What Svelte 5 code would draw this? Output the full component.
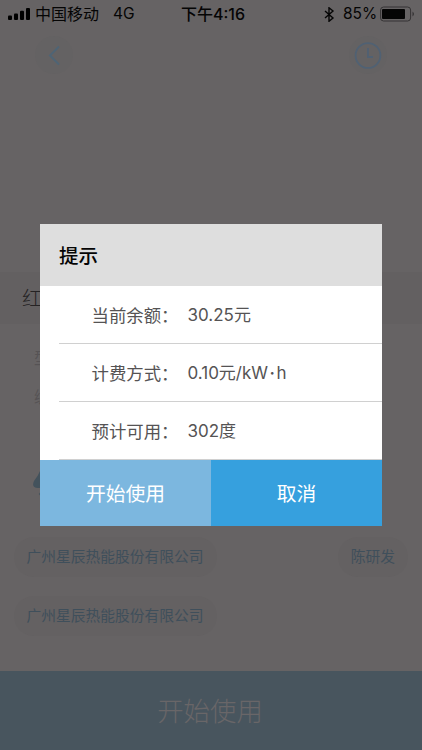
<script>
  const rows = [
    { label: '当前余额：', value: ['30.25元'] },
    { label: '计费方式：', value: ['0.10元/kW', '·', 'h'] },
    { label: '预计可用：', value: ['302度'] }
  ];
</script>

<div class="screen">
  <header class="status">
    <svg class="signal" width="23" height="12" viewBox="0 0 23 12"><rect y="7.5" width="4" height="4.5" rx="1"/><rect x="6" y="5.5" width="4" height="6.5" rx="1"/><rect x="12" y="2.8" width="4" height="9.2" rx="1"/><rect x="18" width="4" height="12" rx="1"/></svg>
    <span class="carrier">中国移动</span>
    <span class="net">4G</span>
    <b class="time">下午4:16</b>
    <svg class="bt" width="11" height="15" viewBox="0 0 11 15" fill="none" stroke="#060606" stroke-width="1.4"><path d="M1 4l8 7-4 3.3V.8L9 4l-8 7"/></svg>
    <span class="pct">85%</span>
    <svg width="36" height="16" viewBox="0 0 36 16"><rect x=".6" y="1" width="30" height="14" rx="3" fill="none" stroke="#353334"/><rect x="2" y="3" width="23" height="10" rx="1" fill="#050505"/><path d="M32.5 5.5q3 2.5 0 5z" fill="#353334"/></svg>
  </header>

  <nav>
    <div class="round">
      <svg width="38" height="38" viewBox="0 0 38 38" fill="none" stroke="#4e6475" stroke-width="2"><path d="M24 10.5l-9 9 9 9"/></svg>
    </div>
    <div class="round">
      <svg width="38" height="38" viewBox="0 0 38 38" fill="none" stroke="#506173" stroke-width="1.8"><circle cx="19" cy="19.5" r="12.4"/><path d="M19 12v9h5"/></svg>
    </div>
  </nav>

  <section class="device">红</section>
  <section class="info">
    <div>型号</div>
    <div>编号</div>
  </section>
  <section class="water">
    <svg width="30" height="30" viewBox="0 0 30 30"><path d="M8 0Q5 7 1 12q-3 7 4 7h12V0z" fill="#43525c"/><circle cx="7" cy="25" r="1.2" fill="#4c575f"/></svg>
  </section>

  <section class="tags">
    <div class="tagrow"><span class="tag">广州星辰热能股份有限公司</span><span class="tag person">陈研发</span></div>
    <div class="tagrow"><span class="tag">广州星辰热能股份有限公司</span></div>
  </section>
  <footer>开始使用</footer>

  <div class="dialog" role="dialog" aria-label="提示">
    <h2>提示</h2>
    <div class="rows">
      {#each rows as row}
        <div class="row">
          <span class="label">{row.label}</span>
          <span class="value">{#each row.value as part}<span class:dot={part === '·'}>{part}</span>{/each}</span>
        </div>
      {/each}
    </div>
    <div class="actions">
      <button class="start">开始使用</button>
      <button class="cancel">取消</button>
    </div>
  </div>
</div>

<style>
  .screen {
    position: relative;
    display: flex;
    flex-direction: column;
    width: 422px;
    height: 750px;
    overflow: hidden;
    background: #666364;
    color: #050505;
    font-family: Inter, "Noto Sans CJK SC", sans-serif;
  }
  .status {
    box-sizing: border-box;
    display: flex;
    align-items: center;
    flex: none;
    height: 28px;
    padding-left: 8px;
    font-size: 16px;
    line-height: 28px;
    white-space: nowrap;
  }
  .signal { margin-right: 4px; }
  .carrier { width: 78px; }
  .net { width: 68px; font-size: 15.5px; }
  .time { width: 143px; font-weight: 500; }
  .bt { margin-right: 8px; }
  .pct { width: 37px; font-size: 15.5px; }
  nav {
    display: flex;
    justify-content: space-between;
    flex: none;
    height: 244px;
    padding: 8px 35px 0;
    box-sizing: border-box;
  }
  .round { width: 38px; height: 38px; border-radius: 50%; background: #646263; }
  .device {
    flex: none;
    height: 52px;
    box-sizing: border-box;
    padding-left: 22px;
    background: #636061;
    font-size: 20px;
    line-height: 54px;
    font-weight: 300;
    color: #252324;
  }
  .info {
    flex: none;
    height: 114px;
    box-sizing: border-box;
    padding: 15px 0 0 34px;
    font-size: 16px;
    line-height: 39px;
    color: #565355;
  }
  .water { flex: none; height: 90px; box-sizing: border-box; padding: 31px 0 0 33px; }
  .tags { flex: none; height: 143px; box-sizing: border-box; padding: 9px 12px 0 14px; }
  .tagrow { display: flex; justify-content: space-between; height: 59px; }
  .tag {
    box-sizing: border-box;
    height: 40px;
    padding: 0 13px 0 12.5px;
    border-radius: 20px;
    background: #646162;
    color: #3f4f5b;
    font-size: 14.75px;
    line-height: 41px;
    white-space: nowrap;
  }
  .person { margin-right: 2px; }
  footer {
    flex: none;
    height: 79px;
    background: #48555e;
    color: #696668;
    font-size: 26.4px;
    line-height: 81px;
    text-align: center;
    font-weight: 300;
    text-indent: -2px;
  }
  .dialog {
    position: absolute;
    left: 40px;
    top: 224px;
    width: 342px;
    height: 302px;
    background: #fff;
  }
  h2 {
    box-sizing: border-box;
    height: 62px;
    margin: 0;
    padding-left: 19px;
    background: #dedede;
    font-size: 19.5px;
    font-weight: 500;
    line-height: 64px;
  }
  .rows { height: 174px; margin-left: 19px; }
  .row {
    display: flex;
    box-sizing: border-box;
    height: 58px;
    padding-left: 32.5px;
    border-bottom: 1px solid #d0d0d0;
    color: #555354;
    font-size: 17.4px;
    line-height: 59px;
    white-space: nowrap;
  }
  .label { width: 96px; }
  .value { font-size: 17px; }
  .dot { margin: 0 1.5px; font-weight: 600; }
  .actions { display: flex; height: 66px; }
  button {
    flex: 1;
    border: 0;
    padding: 2px 0 0;
    color: #fff;
    font: 19.8px/64px Inter, "Noto Sans CJK SC", sans-serif;
  }
  .start { background: #7cb7df; }
  .cancel { background: #36a0de; }
</style>
